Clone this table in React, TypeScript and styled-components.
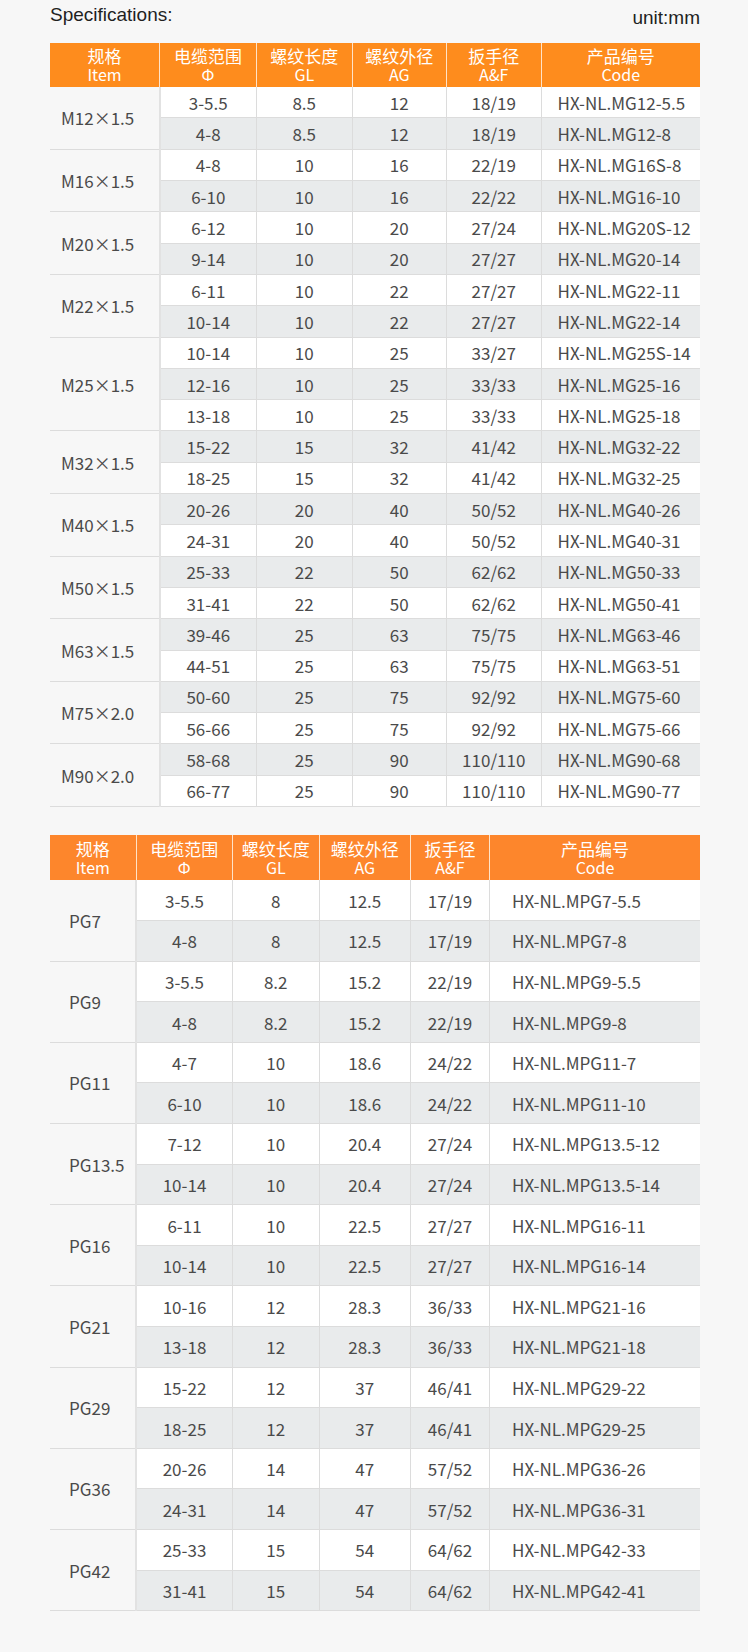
import React from "react";
import styled, { createGlobalStyle } from "styled-components";

const Global = createGlobalStyle`
  html, body { margin: 0; padding: 0; background: #f7f7f7; }
  body { font-family: "Noto Sans CJK SC", "Noto Sans", sans-serif; }
`;

const Page = styled.div`
  width: 748px;
  min-height: 1652px;
  box-sizing: border-box;
  padding: 0 48px 41px 50px;
  background: #f7f7f7;
`;

const TitleBar = styled.div`
  display: flex;
  justify-content: space-between;
  align-items: flex-start;
  height: 42.7px;
  font-family: "Liberation Sans", Arial, sans-serif;
  font-size: 19px;
  color: #1f1f1f;
`;

const Title = styled.div`
  padding-top: 4px;
`;

const Unit = styled.div`
  padding-top: 7px;
`;

const Table = styled.table<{ $gap?: number }>`
  width: 650px;
  border-collapse: collapse;
  table-layout: fixed;
  margin-top: ${(p) => p.$gap ?? 0}px;
`;

const HeadCell = styled.th<{ $bg: string; $h: number }>`
  background: ${(p) => p.$bg};
  height: ${(p) => p.$h}px;
  padding: 0;
  color: #fff;
  font-weight: 400;
  text-align: center;
  vertical-align: middle;
  border-left: 1.5px solid #ffe3c8;
  &:first-child { border-left: none; }
`;

const HeadZh = styled.div`
  font-size: 17px;
  line-height: 19px;
`;

const HeadEn = styled.div`
  font-size: 16px;
  line-height: 18px;
  font-weight: 400;
`;

const Row = styled.tr<{ $alt: boolean; $h: number }>`
  height: ${(p) => p.$h}px;
  background: ${(p) => (p.$alt ? "#e9ebec" : "#ffffff")};
`;

const ItemCell = styled.td<{ $pad: number; $align: string }>`
  background: #f7f7f7;
  color: #4a4a4a;
  font-size: 17px;
  padding: 0 0 0 ${(p) => p.$pad}px;
  text-align: ${(p) => p.$align};
  vertical-align: middle;
  border-bottom: 1.5px solid #dcdcdc;
  border-right: 2px solid #e2e2e2;
  white-space: nowrap;
`;

const Cell = styled.td<{ $left?: number }>`
  color: #4a4a4a;
  font-size: 17px;
  padding: 0 0 0 ${(p) => p.$left ?? 0}px;
  text-align: ${(p) => (p.$left ? "left" : "center")};
  vertical-align: middle;
  border-bottom: 1.5px solid #dcdcdc;
  border-left: 1.5px solid #dcdcdc;
  white-space: nowrap;
`;

type Group = { item: string; rows: string[][] };

const t1: Group[] = [
  { item: "M12×1.5", rows: [["3-5.5", "8.5", "12", "18/19", "HX-NL.MG12-5.5"], ["4-8", "8.5", "12", "18/19", "HX-NL.MG12-8"]] },
  { item: "M16×1.5", rows: [["4-8", "10", "16", "22/19", "HX-NL.MG16S-8"], ["6-10", "10", "16", "22/22", "HX-NL.MG16-10"]] },
  { item: "M20×1.5", rows: [["6-12", "10", "20", "27/24", "HX-NL.MG20S-12"], ["9-14", "10", "20", "27/27", "HX-NL.MG20-14"]] },
  { item: "M22×1.5", rows: [["6-11", "10", "22", "27/27", "HX-NL.MG22-11"], ["10-14", "10", "22", "27/27", "HX-NL.MG22-14"]] },
  { item: "M25×1.5", rows: [["10-14", "10", "25", "33/27", "HX-NL.MG25S-14"], ["12-16", "10", "25", "33/33", "HX-NL.MG25-16"], ["13-18", "10", "25", "33/33", "HX-NL.MG25-18"]] },
  { item: "M32×1.5", rows: [["15-22", "15", "32", "41/42", "HX-NL.MG32-22"], ["18-25", "15", "32", "41/42", "HX-NL.MG32-25"]] },
  { item: "M40×1.5", rows: [["20-26", "20", "40", "50/52", "HX-NL.MG40-26"], ["24-31", "20", "40", "50/52", "HX-NL.MG40-31"]] },
  { item: "M50×1.5", rows: [["25-33", "22", "50", "62/62", "HX-NL.MG50-33"], ["31-41", "22", "50", "62/62", "HX-NL.MG50-41"]] },
  { item: "M63×1.5", rows: [["39-46", "25", "63", "75/75", "HX-NL.MG63-46"], ["44-51", "25", "63", "75/75", "HX-NL.MG63-51"]] },
  { item: "M75×2.0", rows: [["50-60", "25", "75", "92/92", "HX-NL.MG75-60"], ["56-66", "25", "75", "92/92", "HX-NL.MG75-66"]] },
  { item: "M90×2.0", rows: [["58-68", "25", "90", "110/110", "HX-NL.MG90-68"], ["66-77", "25", "90", "110/110", "HX-NL.MG90-77"]] },
];

const t2: Group[] = [
  { item: "PG7", rows: [["3-5.5", "8", "12.5", "17/19", "HX-NL.MPG7-5.5"], ["4-8", "8", "12.5", "17/19", "HX-NL.MPG7-8"]] },
  { item: "PG9", rows: [["3-5.5", "8.2", "15.2", "22/19", "HX-NL.MPG9-5.5"], ["4-8", "8.2", "15.2", "22/19", "HX-NL.MPG9-8"]] },
  { item: "PG11", rows: [["4-7", "10", "18.6", "24/22", "HX-NL.MPG11-7"], ["6-10", "10", "18.6", "24/22", "HX-NL.MPG11-10"]] },
  { item: "PG13.5", rows: [["7-12", "10", "20.4", "27/24", "HX-NL.MPG13.5-12"], ["10-14", "10", "20.4", "27/24", "HX-NL.MPG13.5-14"]] },
  { item: "PG16", rows: [["6-11", "10", "22.5", "27/27", "HX-NL.MPG16-11"], ["10-14", "10", "22.5", "27/27", "HX-NL.MPG16-14"]] },
  { item: "PG21", rows: [["10-16", "12", "28.3", "36/33", "HX-NL.MPG21-16"], ["13-18", "12", "28.3", "36/33", "HX-NL.MPG21-18"]] },
  { item: "PG29", rows: [["15-22", "12", "37", "46/41", "HX-NL.MPG29-22"], ["18-25", "12", "37", "46/41", "HX-NL.MPG29-25"]] },
  { item: "PG36", rows: [["20-26", "14", "47", "57/52", "HX-NL.MPG36-26"], ["24-31", "14", "47", "57/52", "HX-NL.MPG36-31"]] },
  { item: "PG42", rows: [["25-33", "15", "54", "64/62", "HX-NL.MPG42-33"], ["31-41", "15", "54", "64/62", "HX-NL.MPG42-41"]] },
];

const heads: [string, string][] = [
  ["规格", "Item"],
  ["电缆范围", "Φ"],
  ["螺纹长度", "GL"],
  ["螺纹外径", "AG"],
  ["扳手径", "A&F"],
  ["产品编号", "Code"],
];

type SpecProps = {
  groups: Group[];
  widths: number[];
  headBg: string;
  headH: number;
  rowH: number;
  itemPad: number;
  itemAlign: string;
  codePad: number;
  gap?: number;
};

function SpecTable({ groups, widths, headBg, headH, rowH, itemPad, itemAlign, codePad, gap }: SpecProps) {
  let idx = 0;
  return (
    <Table $gap={gap}>
      <colgroup>
        {widths.map((w, i) => (
          <col key={i} style={{ width: w }} />
        ))}
      </colgroup>
      <thead>
        <tr>
          {heads.map(([zh, en]) => (
            <HeadCell key={zh} $bg={headBg} $h={headH}>
              <HeadZh>{zh}</HeadZh>
              <HeadEn>{en}</HeadEn>
            </HeadCell>
          ))}
        </tr>
      </thead>
      <tbody>
        {groups.map((g) =>
          g.rows.map((r, ri) => {
            const alt = idx % 2 === 1;
            idx++;
            return (
              <Row key={g.item + ri} $alt={alt} $h={rowH}>
                {ri === 0 && (
                  <ItemCell rowSpan={g.rows.length} $pad={itemPad} $align={itemAlign}>
                    {g.item}
                  </ItemCell>
                )}
                {r.map((v, ci) => (
                  <Cell key={ci} $left={ci === 4 ? codePad : undefined}>
                    {v}
                  </Cell>
                ))}
              </Row>
            );
          })
        )}
      </tbody>
    </Table>
  );
}

export default function App() {
  return (
    <>
      <Global />
      <Page>
        <TitleBar>
          <Title>Specifications:</Title>
          <Unit>unit:mm</Unit>
        </TitleBar>
        <SpecTable
          groups={t1}
          widths={[109.5, 97, 95.5, 94.5, 94.5, 159]}
          headBg="#fe8c1d"
          headH={44}
          rowH={31.3}
          itemPad={11}
          itemAlign="left"
          codePad={16}
        />
        <SpecTable
          groups={t2}
          widths={[86, 96.5, 86.5, 91.5, 79, 210.5]}
          headBg="#fd862c"
          headH={45}
          rowH={40.6}
          itemPad={19}
          itemAlign="left"
          codePad={22}
          gap={28}
        />
      </Page>
    </>
  );
}
